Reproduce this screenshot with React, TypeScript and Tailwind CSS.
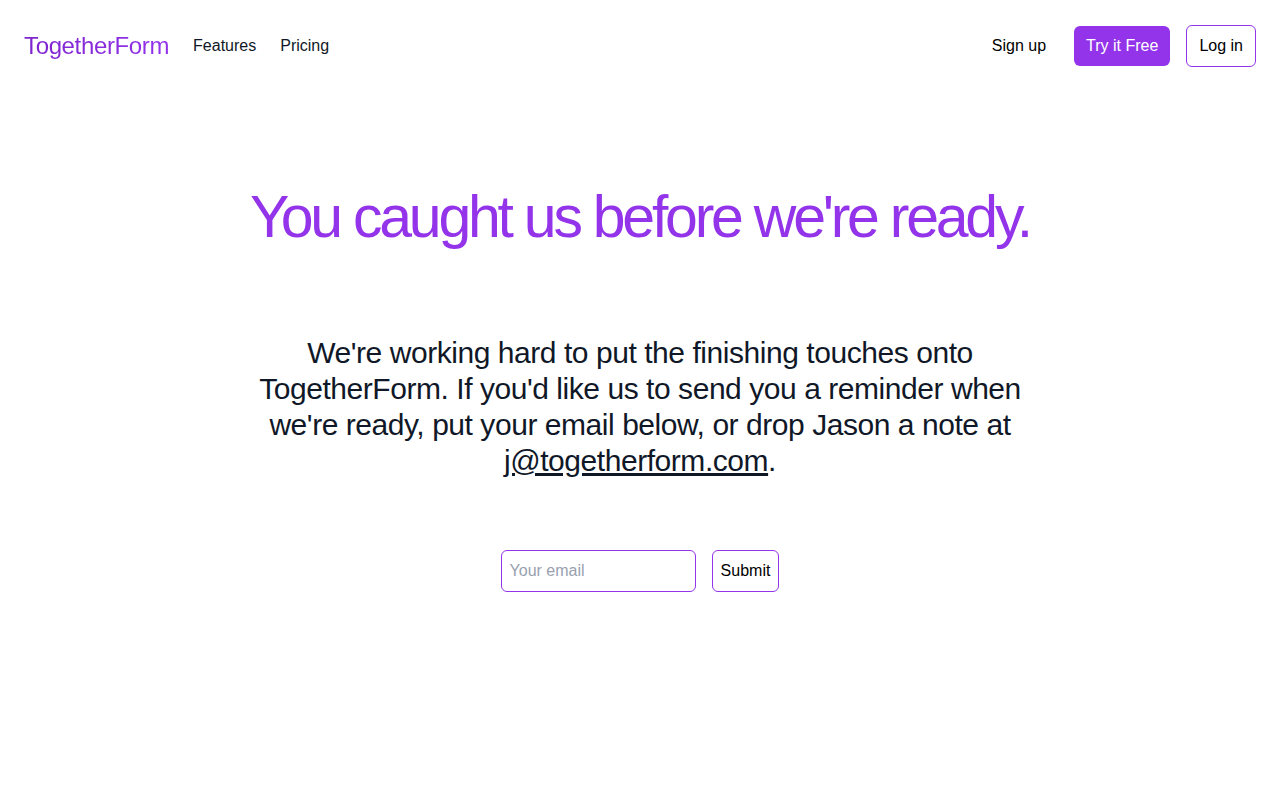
export default function App() {
  return (
    <div className="min-h-screen bg-white text-gray-900" style={{ fontFamily: '"Liberation Sans", Arial, sans-serif' }}>
      {/* Nav */}
      <nav className="flex h-[90px] items-center justify-between px-6 pt-[2px]">
        <div className="flex items-center gap-6">
          <a href="#" className="bg-gradient-to-r from-[#7e22ce] to-[#9333ea] bg-clip-text text-2xl tracking-[-0.015em] text-transparent">
            TogetherForm
          </a>
          <a href="#" className="text-base text-gray-900">Features</a>
          <a href="#" className="text-base text-gray-900">Pricing</a>
        </div>
        <div className="flex items-center gap-4">
          <a href="#" className="px-3 py-2 text-base text-black">Sign up</a>
          <a href="#" className="flex h-10 items-center rounded-md bg-[#9333ea] px-3 text-base text-white">Try it Free</a>
          <a href="#" className="flex h-[42px] items-center rounded-md border border-[#9333ea] px-3 text-base text-black">Log in</a>
        </div>
      </nav>

      <main className="flex flex-col items-center">
        <h1 className="mt-[98px] text-[59px] leading-none tracking-[-0.055em] text-[#9333ea]">
          You caught us before we're ready.
        </h1>

        <p className="mt-[88px] max-w-3xl text-center text-3xl tracking-[-0.015em] text-gray-900">
          We're working hard to put the finishing touches onto TogetherForm. If you'd like us to send you a reminder when we're ready, put your email below, or drop Jason a note at{' '}
          <a href="mailto:j@togetherform.com" className="underline">j@togetherform.com</a>.
        </p>

        <form className="mt-[71px] flex items-center gap-4" onSubmit={(e) => e.preventDefault()}>
          <input
            type="email"
            placeholder="Your email"
            className="h-[42px] w-[195px] rounded-md border border-[#9333ea] px-2 text-base outline-none placeholder:text-gray-400"
          />
          <button type="submit" className="h-[42px] rounded-md border border-[#9333ea] px-2 text-base text-black">
            Submit
          </button>
        </form>
      </main>
    </div>
  );
}
